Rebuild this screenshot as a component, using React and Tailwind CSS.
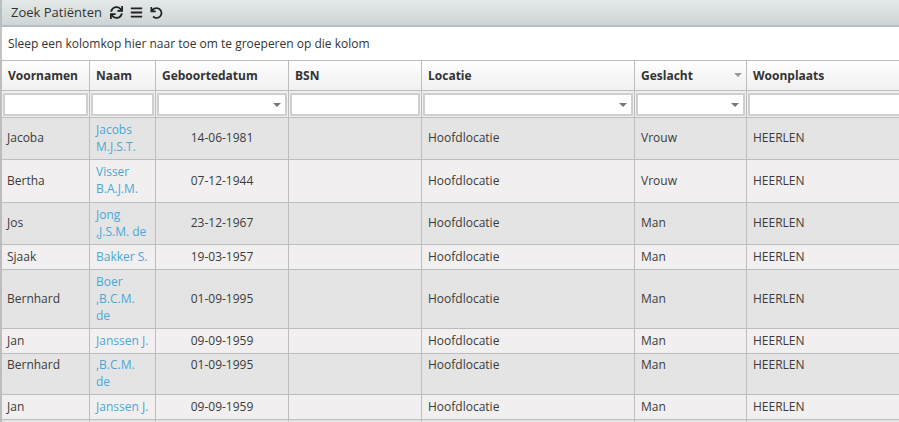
import React from 'react';
import { FaSync, FaBars, FaUndo } from 'react-icons/fa';

const columns = [
  { label: 'Voornamen', width: 'w-[88px]' },
  { label: 'Naam', width: 'w-[66px]' },
  { label: 'Geboortedatum', width: 'w-[133px]' },
  { label: 'BSN', width: 'w-[133px]' },
  { label: 'Locatie', width: 'w-[213px]' },
  { label: 'Geslacht', width: 'w-[112px]', sort: true },
  { label: 'Woonplaats', width: 'w-[200px]' },
];

const rows = [
  { first: 'Jacoba', name: ['Jacobs', 'M.J.S.T.'], date: '14-06-1981', sex: 'Vrouw', h: 'h-[42px]' },
  { first: 'Bertha', name: ['Visser', 'B.A.J.M.'], date: '07-12-1944', sex: 'Vrouw', h: 'h-[43px]' },
  { first: 'Jos', name: ['Jong', ',J.S.M. de'], date: '23-12-1967', sex: 'Man', h: 'h-[42px]' },
  { first: 'Sjaak', name: ['Bakker S.'], date: '19-03-1957', sex: 'Man', h: 'h-[25px]' },
  { first: 'Bernhard', name: ['Boer', ',B.C.M.', 'de'], date: '01-09-1995', sex: 'Man', h: 'h-[59px]' },
  { first: 'Jan', name: ['Janssen J.'], date: '09-09-1959', sex: 'Man', h: 'h-[25px]' },
  { first: 'Bernhard', name: [',B.C.M.', 'de'], date: '01-09-1995', sex: 'Man', h: 'h-[41px]', top: true },
  { first: 'Jan', name: ['Janssen J.'], date: '09-09-1959', sex: 'Man', h: 'h-[25px]' },
  { first: '', name: [''], date: '', sex: '', h: 'h-[25px]' },
];

function Caret({ className = '' }) {
  return <span className={`h-0 w-0 border-x-[4px] border-t-[4px] border-x-transparent border-t-[#777] ${className}`} />;
}

function Filter({ select }) {
  return (
    <div className="flex h-[23px] items-center justify-end border-2 border-[#cfcfcf] bg-white pr-[4px]">
      {select && <Caret />}
    </div>
  );
}

function Cell({ row, children, className = '' }) {
  return (
    <td className={`border-r border-b border-[#bdbdbd] px-[6px] ${row.top ? 'pt-[2px] align-top' : 'pb-[2px] align-middle'} ${className}`}>
      {children}
    </td>
  );
}

export default function App() {
  return (
    <div className="h-[422px] w-[899px] overflow-hidden bg-white font-['Open_Sans',sans-serif] text-[12px] leading-[17px] text-[#3b3b3b]">
      <div className="flex h-[27px] items-center gap-[8px] border-b-2 border-l-2 border-[#b9bfc1] bg-gradient-to-b from-[#e4e8e8] to-[#cfd5d6] pl-[9px]">
        <span className="text-[13px] text-[#333]">Zoek Patiënten</span>
        <span className="flex items-center gap-[7px] text-[#222]">
          <FaSync className="h-[13px] w-[13px]" />
          <FaBars className="h-[13px] w-[13px]" />
          <FaUndo className="h-[12px] w-[13px]" />
        </span>
      </div>
      <div className="flex h-[33px] items-center border-l-2 border-[#c4c4c4] pb-[1px] pl-[6px] text-[12px] text-[#333]">
        Sleep een kolomkop hier naar toe om te groeperen op die kolom
      </div>
      <table className="w-[945px] table-fixed border-separate border-spacing-0 border-l-2 border-[#bdbdbd]">
        <thead>
          <tr className="h-[31px] bg-gradient-to-b from-[#ffffff] to-[#f1efef]">
            {columns.map((col) => (
              <th key={col.label} className={`${col.width} border-t border-r border-b border-[#bdbdbd] px-[6px] pb-[1px] text-left text-[12px] font-bold text-[#333]`}>
                <div className="flex items-center justify-between">
                  <span>{col.label}</span>
                  {col.sort && <Caret className="-mr-[2px] border-x-[3px] border-t-[3px] border-t-[#999]" />}
                </div>
              </th>
            ))}
          </tr>
          <tr className="h-[27px] bg-[#f1efef]">
            {columns.map((col, i) => (
              <td key={col.label} className="border-r border-b border-[#bdbdbd] px-[1px] pt-[2px] align-top">
                <Filter select={i === 2 || i === 4 || i === 5} />
              </td>
            ))}
          </tr>
        </thead>
        <tbody>
          {rows.map((row, i) => (
            <tr key={i} className={`${row.h} ${i % 2 === 0 ? 'bg-[#e4e4e4]' : 'bg-[#f1efef]'}`}>
              <Cell row={row} className="pl-[5px]">{row.first}</Cell>
              <Cell row={row} className="text-[#49a8d8]">
                {row.name.map((line, j) => (
                  <div key={j}>{line}</div>
                ))}
              </Cell>
              <Cell row={row} className="text-center">{row.date}</Cell>
              <Cell row={row}></Cell>
              <Cell row={row}>{row.first && 'Hoofdlocatie'}</Cell>
              <Cell row={row}>{row.sex}</Cell>
              <Cell row={row}>{row.first && 'HEERLEN'}</Cell>
            </tr>
          ))}
        </tbody>
      </table>
    </div>
  );
}
